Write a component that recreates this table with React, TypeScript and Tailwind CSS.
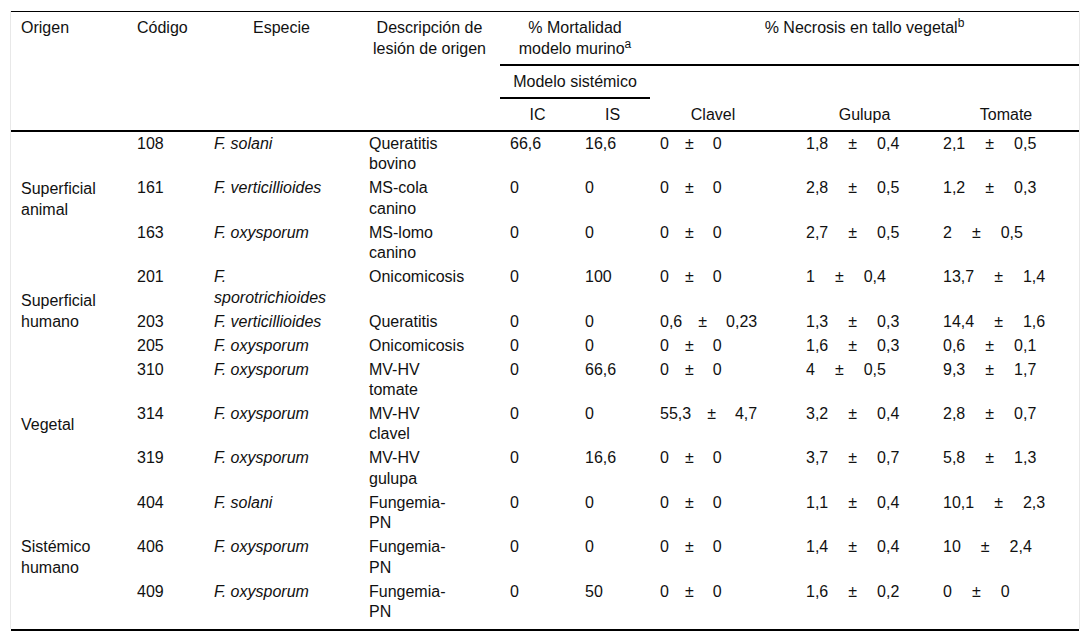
type Row = {
  code: string;
  sp: string[];
  desc: string[];
  ic: string;
  is: string;
  cl: [string, string];
  gu: [string, string];
  to: [string, string];
};

const groups: { origen: string[]; rows: Row[] }[] = [
  {
    origen: ['Superficial', 'animal'],
    rows: [
      { code: '108', sp: ['F. solani'], desc: ['Queratitis', 'bovino'], ic: '66,6', is: '16,6', cl: ['0', '0'], gu: ['1,8', '0,4'], to: ['2,1', '0,5'] },
      { code: '161', sp: ['F. verticillioides'], desc: ['MS-cola', 'canino'], ic: '0', is: '0', cl: ['0', '0'], gu: ['2,8', '0,5'], to: ['1,2', '0,3'] },
      { code: '163', sp: ['F. oxysporum'], desc: ['MS-lomo', 'canino'], ic: '0', is: '0', cl: ['0', '0'], gu: ['2,7', '0,5'], to: ['2', '0,5'] },
    ],
  },
  {
    origen: ['Superficial', 'humano'],
    rows: [
      { code: '201', sp: ['F.', 'sporotrichioides'], desc: ['Onicomicosis'], ic: '0', is: '100', cl: ['0', '0'], gu: ['1', '0,4'], to: ['13,7', '1,4'] },
      { code: '203', sp: ['F. verticillioides'], desc: ['Queratitis'], ic: '0', is: '0', cl: ['0,6', '0,23'], gu: ['1,3', '0,3'], to: ['14,4', '1,6'] },
      { code: '205', sp: ['F. oxysporum'], desc: ['Onicomicosis'], ic: '0', is: '0', cl: ['0', '0'], gu: ['1,6', '0,3'], to: ['0,6', '0,1'] },
    ],
  },
  {
    origen: ['Vegetal'],
    rows: [
      { code: '310', sp: ['F. oxysporum'], desc: ['MV-HV', 'tomate'], ic: '0', is: '66,6', cl: ['0', '0'], gu: ['4', '0,5'], to: ['9,3', '1,7'] },
      { code: '314', sp: ['F. oxysporum'], desc: ['MV-HV', 'clavel'], ic: '0', is: '0', cl: ['55,3', '4,7'], gu: ['3,2', '0,4'], to: ['2,8', '0,7'] },
      { code: '319', sp: ['F. oxysporum'], desc: ['MV-HV', 'gulupa'], ic: '0', is: '16,6', cl: ['0', '0'], gu: ['3,7', '0,7'], to: ['5,8', '1,3'] },
    ],
  },
  {
    origen: ['Sistémico', 'humano'],
    rows: [
      { code: '404', sp: ['F. solani'], desc: ['Fungemia-', 'PN'], ic: '0', is: '0', cl: ['0', '0'], gu: ['1,1', '0,4'], to: ['10,1', '2,3'] },
      { code: '406', sp: ['F. oxysporum'], desc: ['Fungemia-', 'PN'], ic: '0', is: '0', cl: ['0', '0'], gu: ['1,4', '0,4'], to: ['10', '2,4'] },
      { code: '409', sp: ['F. oxysporum'], desc: ['Fungemia-', 'PN'], ic: '0', is: '50', cl: ['0', '0'], gu: ['1,6', '0,2'], to: ['0', '0'] },
    ],
  },
];

// texto en varias líneas, cortes fijos como en la tabla original
const Lines = ({ parts }: { parts: string[] }) => (
  <>
    {parts.map((p, i) => (
      <span key={i} className="block">
        {p}
      </span>
    ))}
  </>
);

// media ± desviación; la columna Clavel va más apretada
const PlusMinus = ({ v, tight }: { v: [string, string]; tight?: boolean }) => (
  <span className="inline-flex">
    <span>{v[0]}</span>
    <span className={tight ? 'ml-[16px] mr-[19px]' : 'mx-[20px]'}>±</span>
    <span>{v[1]}</span>
  </span>
);

const th = 'px-[10px] py-[5px] font-normal align-top leading-[21px]';
const td = 'px-[10px] pt-[2px] pb-[1.6px] align-top leading-[20.4px]';

export default function App() {
  return (
    <div className="min-h-screen bg-white pt-[11px]">
      <div
        className="ml-[10px] w-[1070px] border-x border-[#e8e8e8] pb-[5px] text-[16px] text-[#111]"
        style={{ fontFamily: '"Liberation Sans", Arial, sans-serif' }}
      >
        <table className="w-[1068px] table-fixed border-separate border-spacing-0 border-t border-black">
          <colgroup>
            <col className="w-[116px]" />
            <col className="w-[77px]" />
            <col className="w-[155px]" />
            <col className="w-[141px]" />
            <col className="w-[75px]" />
            <col className="w-[75px]" />
            <col className="w-[146px]" />
            <col className="w-[137px]" />
            <col className="w-[146px]" />
          </colgroup>
          <thead>
            <tr>
              <th rowSpan={3} className={`${th} text-left border-b-2 border-black`}>
                Origen
              </th>
              <th rowSpan={3} className={`${th} text-left border-b-2 border-black`}>
                Código
              </th>
              <th rowSpan={3} className={`${th} text-center border-b-2 border-black`}>
                Especie
              </th>
              <th rowSpan={3} className={`${th} text-center border-b-2 border-black`}>
                <Lines parts={['Descripción de', 'lesión de origen']} />
              </th>
              <th colSpan={2} className={`${th} text-center border-b-2 border-black`}>
                <span className="block">% Mortalidad</span>
                <span className="block">
                  modelo murino<sup className="text-[12px]">a</sup>
                </span>
              </th>
              <th colSpan={3} className={`${th} text-center border-b-2 border-black`}>
                % Necrosis en tallo vegetal<sup className="text-[12px]">b</sup>
              </th>
            </tr>
            <tr>
              <th colSpan={2} className={`${th} text-center border-b-2 border-black`}>
                Modelo sistémico
              </th>
              <th colSpan={3} className={th}></th>
            </tr>
            <tr>
              <th className={`${th} text-center border-b-2 border-black`}>IC</th>
              <th className={`${th} text-center border-b-2 border-black`}>IS</th>
              <th className={`${th} pr-[30px] text-center border-b-2 border-black`}>Clavel</th>
              <th className={`${th} text-center border-b-2 border-black`}>Gulupa</th>
              <th className={`${th} text-center border-b-2 border-black`}>Tomate</th>
            </tr>
          </thead>
          <tbody>
            {groups.map((g) =>
              g.rows.map((r, i) => (
                <tr key={r.code}>
                  {i === 0 && (
                    <td rowSpan={g.rows.length} className="px-[10px] align-middle leading-[21px]">
                      <Lines parts={g.origen} />
                    </td>
                  )}
                  <td className={td}>{r.code}</td>
                  <td className={`${td} italic`}>
                    <Lines parts={r.sp} />
                  </td>
                  <td className={td}>
                    <Lines parts={r.desc} />
                  </td>
                  <td className={td}>{r.ic}</td>
                  <td className={td}>{r.is}</td>
                  <td className={td}>
                    <PlusMinus v={r.cl} tight />
                  </td>
                  <td className={td}>
                    <PlusMinus v={r.gu} />
                  </td>
                  <td className={td}>
                    <PlusMinus v={r.to} />
                  </td>
                </tr>
              ))
            )}
          </tbody>
        </table>
      </div>
      <div className="ml-[11px] w-[1068px] border-t-2 border-black" />
    </div>
  );
}
